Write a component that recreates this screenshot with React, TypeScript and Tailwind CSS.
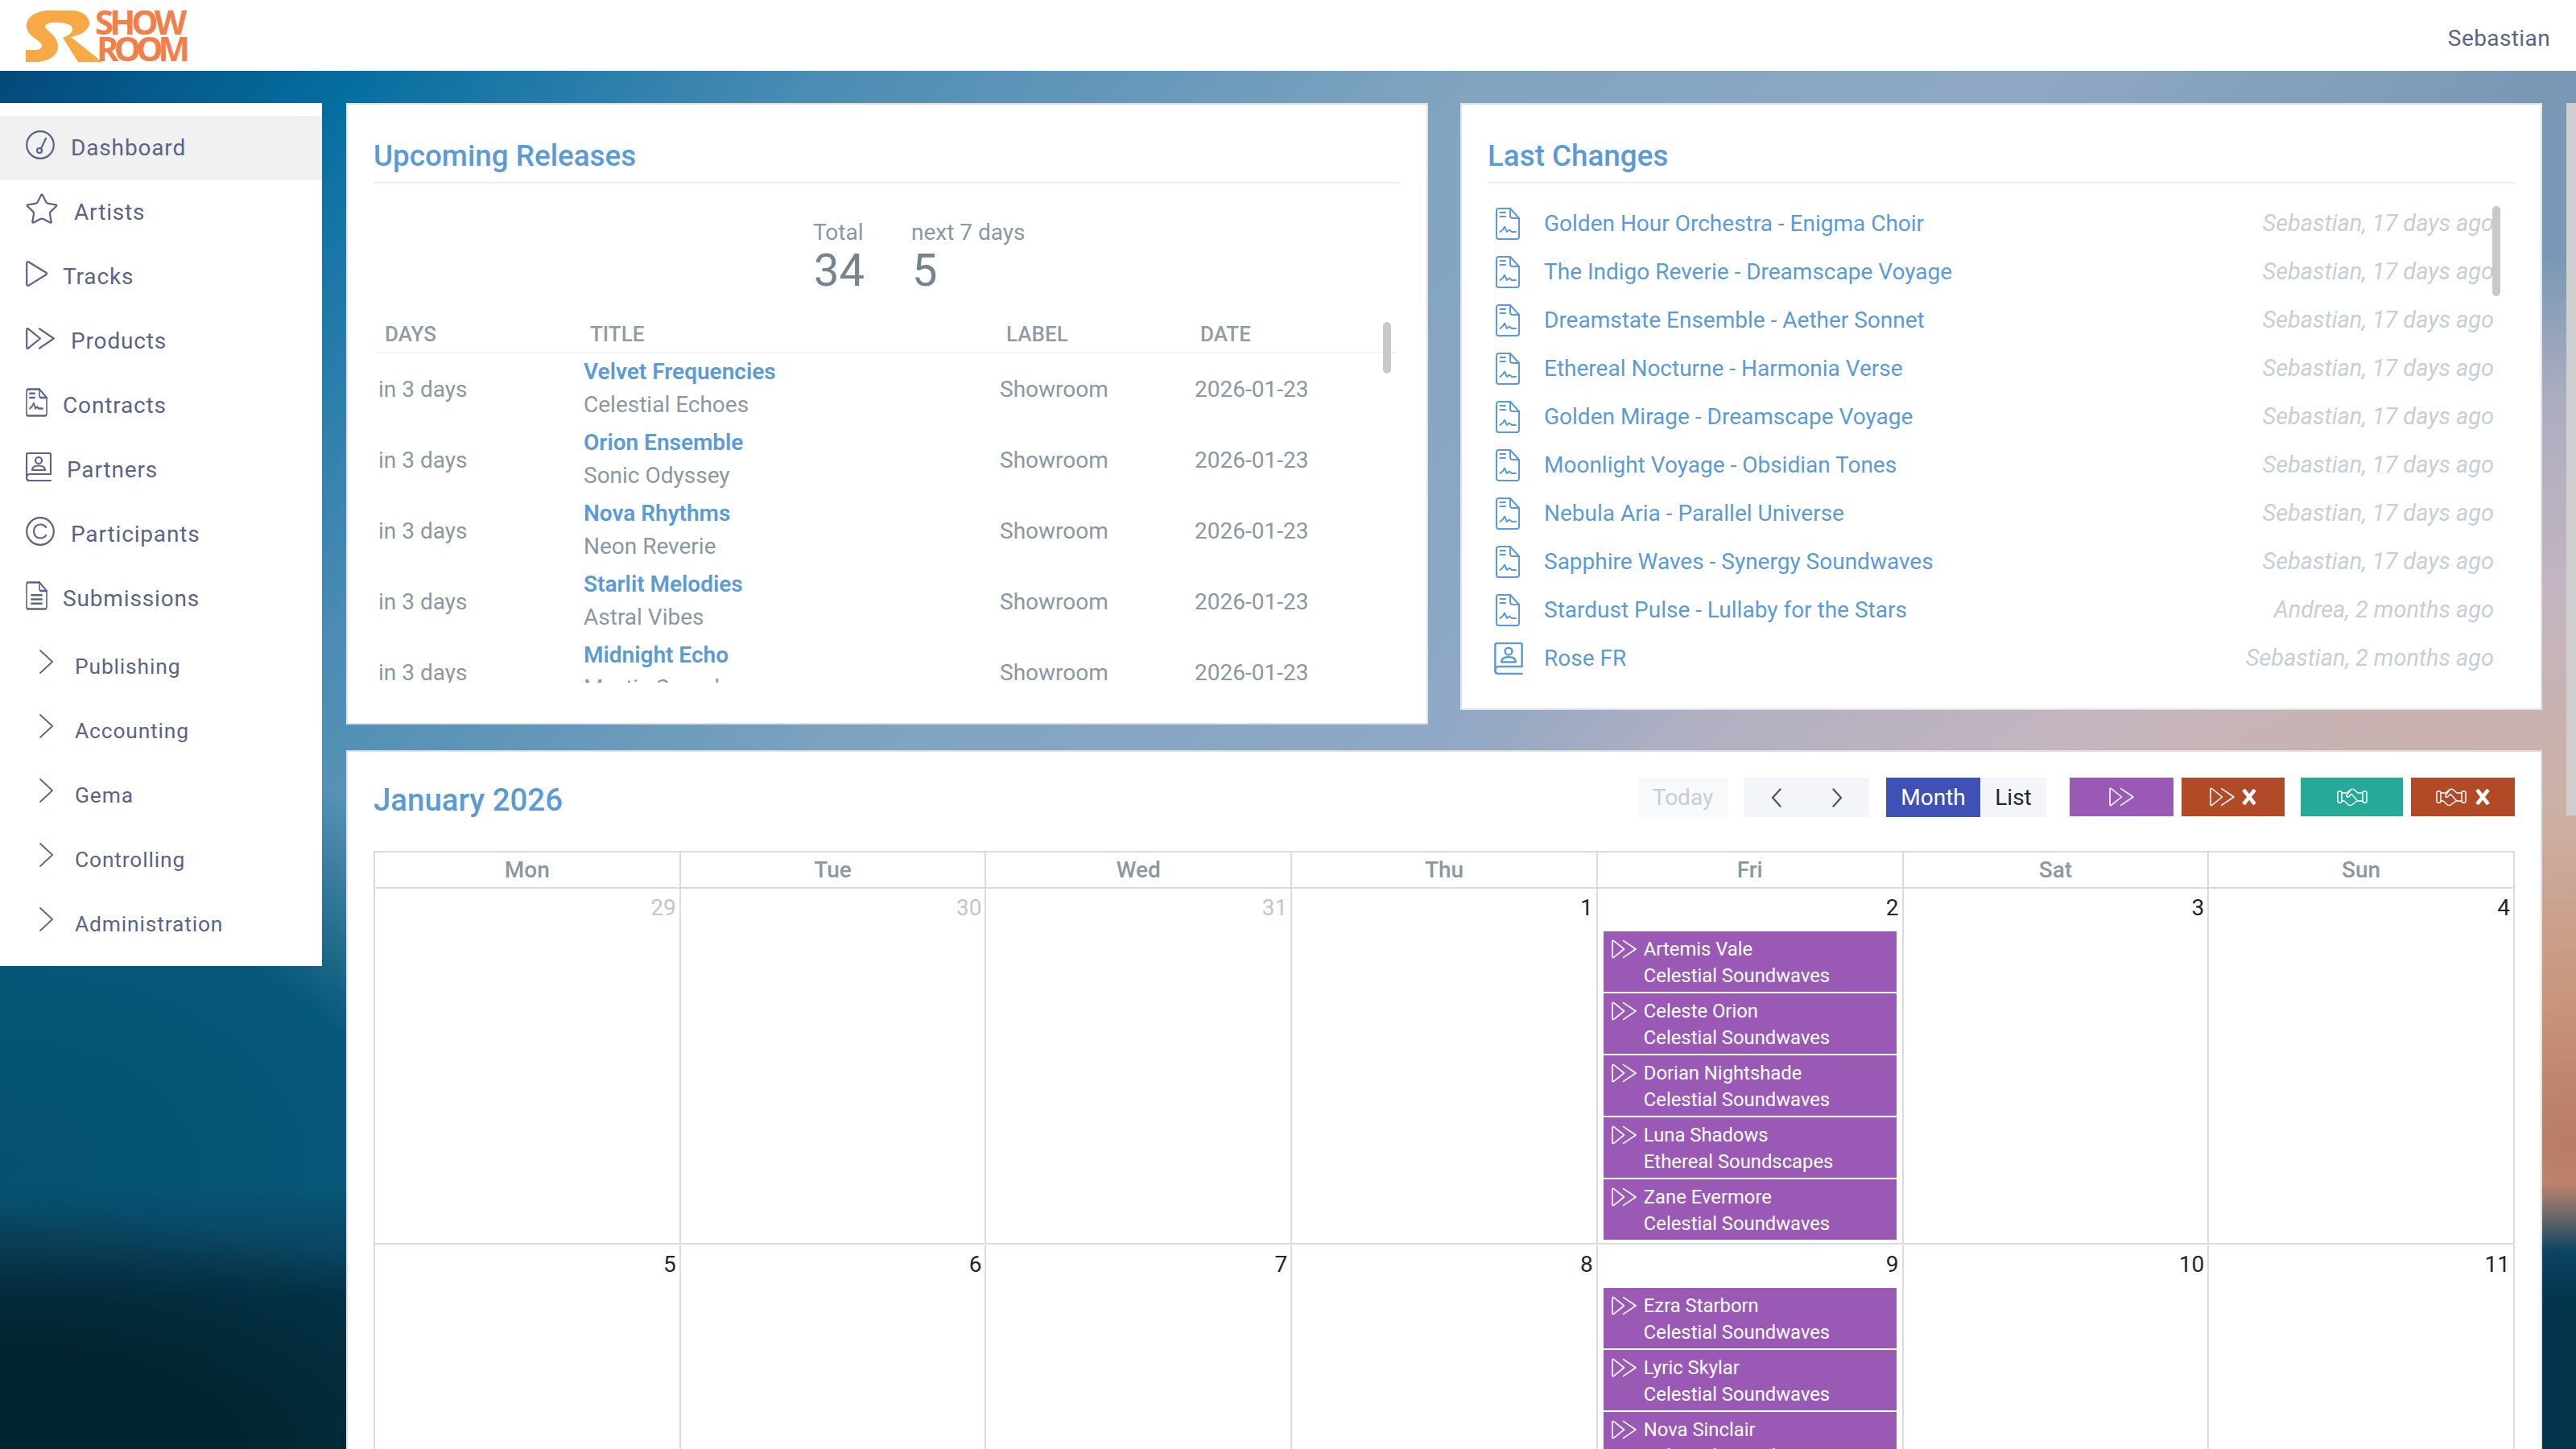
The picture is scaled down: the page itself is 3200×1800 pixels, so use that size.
import React from "react";
import { Star } from "lucide-react";

const IconBase = ({ className, children, vb = "0 0 36 36" }: { className?: string; children: React.ReactNode; vb?: string }) => (
  <svg viewBox={vb} fill="none" stroke="currentColor" strokeWidth={2.2} strokeLinecap="round" strokeLinejoin="round" className={className}>
    {children}
  </svg>
);

const Gauge = () => (
  <IconBase className="w-[36px] h-[36px]">
    <circle cx="18" cy="18" r="16.8" />
    <circle cx="17" cy="25" r="3" />
    <path d="M19 22.5 L25 10" />
  </IconBase>
);
const Play = () => (
  <IconBase className="w-[27px] h-[32px]" vb="0 0 27 32">
    <path d="M1.2 3 C1.2 1.5 2.5 .8 3.6 1.5 L25.5 14.8 C26.2 15.4 26.2 16.4 25.5 17 L3.6 30.6 C2.5 31.2 1.2 30.5 1.2 29 Z" />
  </IconBase>
);
const DoublePlay = ({ className = "w-[36px] h-[27px]", sw = 2.2 }: { className?: string; sw?: number }) => (
  <svg viewBox="0 0 36 27" fill="none" stroke="currentColor" strokeWidth={sw} strokeLinecap="round" strokeLinejoin="round" className={className}>
    <path d="M1.2 2.2 C1.2 1.2 2.2 .8 3 1.4 L18 13.5 L3 25.6 C2.2 26.2 1.2 25.8 1.2 24.8 Z" />
    <path d="M17 1.4 L34.8 13.5 L17 25.6" />
  </svg>
);
const FileSig = ({ className = "w-[27px] h-[24px]" }: { className?: string }) => (
  <svg viewBox="0 0 27 24" fill="none" stroke="currentColor" strokeWidth={1.6} strokeLinecap="round" strokeLinejoin="round" className={className} preserveAspectRatio="none">
    <path d="M17 1 H3 C1.8 1 1 1.8 1 3 V21 C1 22.2 1.8 23 3 23 H24 C25.2 23 26 22.2 26 21 V8 Z" />
    <path d="M17 1 V6 C17 7.2 17.8 8 19 8 H26" />
    <path d="M5 4.5 H11 M5 8 H11" />
    <path d="M5 17 L8 15 L10 12.5 L12 17 L14 15.5 L16 17 H21" />
  </svg>
);
const FileLines = () => (
  <svg viewBox="0 0 27 24" fill="none" stroke="currentColor" strokeWidth={1.6} strokeLinecap="round" strokeLinejoin="round" className="w-[27px] h-[36px]" preserveAspectRatio="none">
    <path d="M17 1 H3 C1.8 1 1 1.8 1 3 V21 C1 22.2 1.8 23 3 23 H24 C25.2 23 26 22.2 26 21 V8 Z" />
    <path d="M17 1 V6 C17 7.2 17.8 8 19 8 H26" />
    <path d="M7 11.5 H20 M7 15 H20 M7 18.5 H20" />
  </svg>
);
const Contact = ({ className = "w-[32px] h-[36px]" }: { className?: string }) => (
  <svg viewBox="0 0 32 36" fill="none" stroke="currentColor" strokeWidth={2.2} strokeLinecap="round" strokeLinejoin="round" className={className}>
    <path d="M31 27 V3 C31 1.8 30.2 1 29 1 H3 C1.8 1 1 1.8 1 3 V32" />
    <path d="M31 35 H5 C2.5 35 1 33.5 1 31.5 C1 29 2.5 27 5 27 H31" />
    <circle cx="16" cy="10" r="4" />
    <path d="M8 22 C8 18 11 16.5 16 16.5 C21 16.5 24 18 24 22 Z" />
  </svg>
);
const Copyright = () => (
  <IconBase className="w-[36px] h-[36px]">
    <circle cx="18" cy="18" r="16.8" />
    <path d="M25 13 C23.5 10.5 21 9.5 18 9.5 C13 9.5 10 13.5 10 18 C10 22.5 13 26.5 18 26.5 C21 26.5 23.5 25.5 25 23" />
  </IconBase>
);
const Chevron = () => (
  <svg viewBox="0 0 17 30" fill="none" stroke="currentColor" strokeWidth={1.8} strokeLinecap="round" strokeLinejoin="round" className="w-[17px] h-[30px]">
    <path d="M1 1 L16 15 L1 29" />
  </svg>
);
const NavArrow = ({ flip }: { flip?: boolean }) => (
  <svg viewBox="0 0 15 24" fill="none" stroke="currentColor" strokeWidth={2.4} strokeLinecap="round" strokeLinejoin="round" className={`w-[15px] h-[24px] ${flip ? "rotate-180" : ""}`}>
    <path d="M12.5 1.5 L3 12 L12.5 22.5" />
  </svg>
);
const Cross = () => (
  <svg viewBox="0 0 20 20" fill="none" stroke="currentColor" strokeWidth={4.6} className="w-[20px] h-[20px]">
    <path d="M3 1 L17 19 M17 1 L3 19" />
  </svg>
);
const Shake = () => (
  <svg viewBox="0 0 38 24" fill="none" stroke="currentColor" strokeWidth={1.5} strokeLinecap="round" strokeLinejoin="round" className="w-[38px] h-[24px]">
    <rect x="1" y="5" width="5" height="14" rx="1.5" />
    <rect x="32" y="5" width="5" height="14" rx="1.5" />
    <path d="M6 7 L12 7 L17 3 C18.5 2 20 2 21.5 3 L26 7 L32 7" />
    <path d="M6 17 L9 17 L14 21.5 C15.5 22.8 17.5 22.8 19 21.5 L25 17 L32 17" />
    <path d="M17 3 L12 10 C11 12 13.5 13 15 11.5 L18 8.5 L25.5 16.5" />
  </svg>
);

const Logo = () => (
  <div className="relative w-[240px] h-[88px] shrink-0">
    <svg viewBox="0 0 130 88" className="absolute left-0 top-0 w-[130px] h-[88px]">
      <path
        fill="#f6a945"
        d="M32 62 L44 62 C52 62 54 57 50 53 C44 47 33 43 33 32 C33 20 47 13 62 13 L88 13 C102 13 111 20 111 29 C111 37 102 43 88 46 L127 77 L97 77 L78 47 C86 44 90 40 90 36 C90 30 80 28 70 28 C60 28 56 30 56 33 C56 37 72 44 72 58 C72 70 58 77 44 77 L32 77 Z"
      />
    </svg>
    <div className="absolute left-[118px] top-[12px] font-['Open_Sans'] font-bold text-[#f27f4a] text-[42px] leading-[30px] tracking-[-5px]">
      SHOW
    </div>
    <div className="absolute left-[120px] top-[45px] font-['Open_Sans'] font-bold text-[#f27f4a] text-[42px] leading-[30px] tracking-[-6px]">
      ROOM
    </div>
  </div>
);

const navTop: [string, React.ReactNode, number, boolean?][] = [
  ["Dashboard", <Gauge />, 20, true],
  ["Artists", <Star className="w-[44px] h-[44px] -ml-[2px]" strokeWidth={1.2} />, 18],
  ["Tracks", <Play />, 19],
  ["Products", <DoublePlay />, 20],
  ["Contracts", <FileSig className="w-[27px] h-[36px]" />, 19],
  ["Partners", <Contact />, 19],
  ["Participants", <Copyright />, 20],
  ["Submissions", <FileLines />, 19],
];
const navSub = ["Publishing", "Accounting", "Gema", "Controlling", "Administration"];

const Sidebar = () => (
  <aside className="w-[400px] h-[1072px] shrink-0 bg-white pt-[16px] text-[#5a6488] text-[28px] tracking-[0.85px]">
    {navTop.map(([label, icon, gap, active]) => (
      <div key={label} className={`h-[80px] flex items-center pl-[32px] ${active ? "bg-[#f1f1f1]" : ""}`} style={{ gap }}>
        <span className="flex -translate-y-[4px]">{icon}</span>
        <span>{label}</span>
      </div>
    ))}
    <div className="h-[5px]" />
    {navSub.map((label) => (
      <div key={label} className="h-[80px] flex items-center pl-[49px] gap-[27px] text-[26.4px]">
        <span className="flex -translate-y-[7px]"><Chevron /></span>
        <span>{label}</span>
      </div>
    ))}
  </aside>
);

const releases = [
  ["Velvet Frequencies", "Celestial Echoes"],
  ["Orion Ensemble", "Sonic Odyssey"],
  ["Nova Rhythms", "Neon Reverie"],
  ["Starlit Melodies", "Astral Vibes"],
  ["Midnight Echo", "Mystic Sound"],
];

const Panel = ({ className, children }: { className?: string; children: React.ReactNode }) => (
  <section className={`bg-white border-2 border-[#dfe1e3] ${className ?? ""}`}>{children}</section>
);

const PanelTitle = ({ children }: { children: React.ReactNode }) => (
  <div className="h-[98px] mx-[32px] border-b-2 border-[#eceef2] pt-[41px] text-[36.8px] leading-[46px] text-[#5b9bd5] font-medium">{children}</div>
);

const Upcoming = () => (
  <Panel className="w-[1344px] h-[772px]">
    <PanelTitle>Upcoming Releases</PanelTitle>
    <div className="flex h-[168px] pt-[44px] text-[#8a98a3] text-[28px] leading-[34px]">
      <div className="ml-[578px] w-[122px]">
        <div>Total</div>
        <div className="text-[56px] leading-[60px] font-normal text-[#75838f] ml-[1px]">34</div>
      </div>
      <div>
        <div>next 7 days</div>
        <div className="text-[56px] leading-[60px] text-[#75838f] ml-[1px]">5</div>
      </div>
    </div>
    <div className="relative mx-[36px] h-[452px] pt-[4px] overflow-hidden">
      <div className="flex h-[39px] border-b-2 border-[#f1f3f5] text-[26px] leading-[30px] font-medium text-[#8f9ca6] items-start">
        <span className="w-[265px] pl-[10px]">DAYS</span>
        <span className="w-[517px]">TITLE</span>
        <span className="w-[241px]">LABEL</span>
        <span>DATE</span>
      </div>
      {releases.map(([t, s]) => (
        <div key={t} className="flex items-center h-[88px] text-[28px] text-[#8a98a3] pl-[2px]">
          <span className="w-[255px] pt-[1px]">in 3 days</span>
          <div className="w-[517px] leading-[41px] -translate-y-[1px]">
            <div className="font-semibold text-[#5b9bd5]">{t}</div>
            <div>{s}</div>
          </div>
          <span className="w-[242px] pt-[1px]">Showroom</span>
          <span className="pt-[1px]">2026-01-23</span>
        </div>
      ))}
      <div className="absolute right-[8px] top-[4px] w-[10px] h-[64px] rounded-full bg-[#c9c9c9]" />
    </div>
  </Panel>
);

const changes: [string, string, boolean?][] = [
  ["Golden Hour Orchestra - Enigma Choir", "Sebastian, 17 days ago"],
  ["The Indigo Reverie - Dreamscape Voyage", "Sebastian, 17 days ago"],
  ["Dreamstate Ensemble - Aether Sonnet", "Sebastian, 17 days ago"],
  ["Ethereal Nocturne - Harmonia Verse", "Sebastian, 17 days ago"],
  ["Golden Mirage - Dreamscape Voyage", "Sebastian, 17 days ago"],
  ["Moonlight Voyage - Obsidian Tones", "Sebastian, 17 days ago"],
  ["Nebula Aria - Parallel Universe", "Sebastian, 17 days ago"],
  ["Sapphire Waves - Synergy Soundwaves", "Sebastian, 17 days ago"],
  ["Stardust Pulse - Lullaby for the Stars", "Andrea, 2 months ago"],
  ["Rose FR", "Sebastian, 2 months ago", true],
];

const FileTall = () => (
  <svg viewBox="0 0 30 40" fill="none" stroke="currentColor" strokeWidth={2} strokeLinecap="round" strokeLinejoin="round" className="w-[30px] h-[40px] mr-[30px] shrink-0">
    <path d="M18 1 H4 C2.2 1 1 2.2 1 4 V36 C1 37.8 2.2 39 4 39 H26 C27.8 39 29 37.8 29 36 V13 Z" />
    <path d="M18 1 V10 C18 11.8 19.2 13 21 13 H29" />
    <path d="M5.5 6 H12 M5.5 11 H12" />
    <path d="M5.5 30 L9 27 L11 23.5 L14 30 L17 27.5 L20 30 H25" />
  </svg>
);

const LastChanges = () => (
  <Panel className="w-[1344px] h-[754px]">
    <PanelTitle>Last Changes</PanelTitle>
    <div className="relative mx-[32px] mt-[20px] text-[28px]">
      {changes.map(([t, m, c]) => (
        <div key={t} className="flex items-center h-[60px] pl-[10px] pr-[26px] text-[#5b9bd5]">
          {c ? <Contact className="w-[36px] h-[40px] -ml-[2px] mr-[26px] shrink-0" /> : <FileTall />}
          <span className="flex-1">{t}</span>
          <span className="italic text-[28.9px] text-[#c6cfd5]">{m}</span>
        </div>
      ))}
      <div className="absolute right-[18px] top-[8px] w-[10px] h-[112px] rounded-full bg-[#c9c9c9]" />
    </div>
  </Panel>
);

const Btn = ({ className, children }: { className?: string; children: React.ReactNode }) => (
  <div className={`flex items-center justify-center ${className ?? ""}`}>{children}</div>
);

const Toolbar = () => (
  <div className="flex items-start">
    <Btn className="w-[111px] h-[49px] bg-[#f8f9fb] text-[#c9ccd5] text-[28px] mr-[21px]">Today</Btn>
    <Btn className="w-[155px] h-[49px] bg-[#f3f5f9] text-[#55585d] gap-[61px] mr-[21px]">
      <NavArrow />
      <NavArrow flip />
    </Btn>
    <Btn className="w-[117px] h-[49px] bg-[#3f51b5] text-white text-[28px]">Month</Btn>
    <Btn className="w-[82px] h-[49px] bg-[#f3f5f9] text-[#23272b] text-[28px] mr-[29px]">List</Btn>
    <Btn className="w-[129px] h-[48px] bg-[#9b59b6] text-white mr-[10px]"><DoublePlay className="w-[31px] h-[26px]" sw={1.8} /></Btn>
    <Btn className="w-[128px] h-[48px] bg-[#b04a27] text-white gap-[8px] mr-[20px]"><DoublePlay className="w-[31px] h-[26px]" sw={1.8} /><Cross /></Btn>
    <Btn className="w-[127px] h-[48px] bg-[#27a99a] text-white mr-[10px]"><Shake /></Btn>
    <Btn className="w-[129px] h-[48px] bg-[#b04a27] text-white gap-[10px]"><Shake /><Cross /></Btn>
  </div>
);

const Event = ({ a, b }: { a: string; b: string }) => (
  <div className="h-[75px] mb-[2px] bg-[#9b59b6] text-white text-[23.8px] leading-[33px] flex pl-[10px] pt-[6px] mx-[7px]">
    <DoublePlay className="w-[31px] h-[24px] mt-[4px] mr-[9px] shrink-0" sw={1.9} />
    <div className="whitespace-nowrap overflow-hidden">
      <div>{a}</div>
      <div>{b}</div>
    </div>
  </div>
);

const Day = ({ n, muted, events }: { n: number; muted?: boolean; events?: [string, string][] }) => (
  <div className="border-r-2 border-[#dcdcdc] min-w-0 overflow-hidden">
    <div className={`h-[53px] pt-[6px] pr-[4px] text-right text-[28px] leading-[36px] ${muted ? "text-[#c3c5c8]" : "text-[#212529]"}`}>{n}</div>
    {events?.map(([a, b]) => <Event key={a} a={a} b={b} />)}
  </div>
);

const CS = "Celestial Soundwaves";
const Calendar = () => (
  <Panel className="w-[2728px] h-[900px] overflow-hidden border-b-0">
    <div className="pl-[32px] pr-[32px]">
      <div className="flex items-start justify-between pt-[32px] h-[123px]">
        <div className="text-[38.4px] leading-[54px] font-medium text-[#5b9bd5] mt-[1px]">January 2026</div>
        <Toolbar />
      </div>
      <div className="border-l-2 border-t-2 border-[#dcdcdc]">
        <div className="grid grid-cols-7 h-[45px] border-b-2 border-[#dcdcdc] text-[#8a98a3] text-[28px] font-medium">
          {["Mon", "Tue", "Wed", "Thu", "Fri", "Sat", "Sun"].map((d) => (
            <div key={d} className="flex items-center justify-center border-r-2 border-[#dcdcdc]">{d}</div>
          ))}
        </div>
        <div className="grid grid-cols-7 h-[442px] border-b-2 border-[#dcdcdc]">
          <Day n={29} muted /><Day n={30} muted /><Day n={31} muted /><Day n={1} />
          <Day n={2} events={[["Artemis Vale", CS], ["Celeste Orion", CS], ["Dorian Nightshade", CS], ["Luna Shadows", "Ethereal Soundscapes"], ["Zane Evermore", CS]]} />
          <Day n={3} /><Day n={4} />
        </div>
        <div className="grid grid-cols-7 h-[400px] pt-[1px]">
          <Day n={5} /><Day n={6} /><Day n={7} /><Day n={8} />
          <Day n={9} events={[["Ezra Starborn", CS], ["Lyric Skylar", CS], ["Nova Sinclair", CS]]} />
          <Day n={10} /><Day n={11} />
        </div>
      </div>
    </div>
  </Panel>
);

export default function App() {
  return (
    <div className="relative h-[1800px] overflow-hidden font-['Roboto',sans-serif] bg-[radial-gradient(ellipse_700px_300px_at_0px_1800px,#02242f_0%,#02242f_40%,transparent_100%),linear-gradient(to_bottom,transparent_1470px,#0b4460_1555px,#03364c_1610px,#03364c_100%),radial-gradient(ellipse_820px_540px_at_0px_1450px,#04506f_0%,#07597a_60%,transparent_100%),radial-gradient(ellipse_1600px_1100px_at_3200px_1420px,#b97a65_0%,#c8957a_16%,#cdb0a4_37%,#c3b5c0_62%,rgba(189,180,196,0.75)_84%,transparent_100%),linear-gradient(131deg,#04497a_57px,#056ea0_397px,#4a8cb4_826px,#80a4c0_1430px,#8fa8c5_1959px,#7a98b5_2449px)]">
      <header className="h-[88px] bg-white flex items-start justify-between pr-[32px]">
        <Logo />
        <div className="mt-[31px] text-[28px] leading-[34px] text-[#5a6488] tracking-[0.4px]">Sebastian</div>
      </header>
      <div className="flex pt-[40px]">
        <Sidebar />
        <main className="ml-[30px] flex flex-col gap-[32px]">
          <div className="flex items-start gap-[40px]">
            <Upcoming />
            <LastChanges />
          </div>
          <Calendar />
        </main>
      </div>
      <div className="absolute right-0 top-[128px] w-[12px] h-[885px] bg-[#cfcfcf]" />
    </div>
  );
}
